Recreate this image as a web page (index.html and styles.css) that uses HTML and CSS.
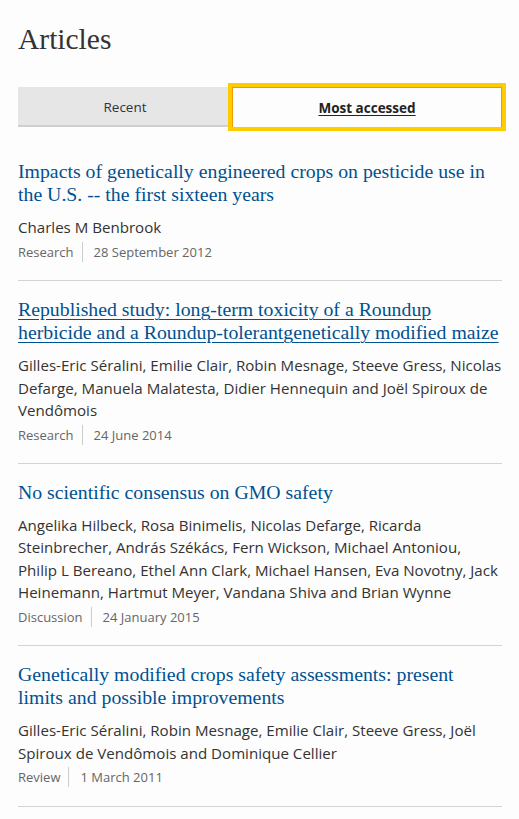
FILE: index.html
```html
<!DOCTYPE html>
<html lang="en">
<head>
<meta charset="utf-8">
<title>Articles</title>
<link rel="stylesheet" href="styles.css">
</head>
<body>
<main class="page">
  <h1 class="heading">Articles</h1>
  <div class="tabs">
    <button class="tab">Recent</button>
    <button class="tab tab-active">Most accessed</button>
  </div>
  <ul class="articles">
    <li class="article">
      <a class="article-title" href="#">Impacts of genetically engineered crops on pesticide use in the U.S. -- the first sixteen years</a>
      <p class="authors">Charles M Benbrook</p>
      <p class="meta"><span class="meta-type">Research</span><span class="meta-date">28 September 2012</span></p>
    </li>
    <li class="article">
      <a class="article-title article-title-hover" href="#">Republished study: long-term toxicity of a Roundup herbicide and a Roundup-tolerantgenetically modified maize</a>
      <p class="authors">Gilles-Eric Séralini, Emilie Clair, Robin Mesnage, Steeve Gress, Nicolas Defarge, Manuela Malatesta, Didier Hennequin and Joël Spiroux de Vendômois</p>
      <p class="meta"><span class="meta-type">Research</span><span class="meta-date">24 June 2014</span></p>
    </li>
    <li class="article">
      <a class="article-title" href="#">No scientific consensus on GMO safety</a>
      <p class="authors">Angelika Hilbeck, Rosa Binimelis, Nicolas Defarge, Ricarda Steinbrecher, András Székács, Fern Wickson, Michael Antoniou, Philip L Bereano, Ethel Ann Clark, Michael Hansen, Eva Novotny, Jack Heinemann, Hartmut Meyer, Vandana Shiva and Brian Wynne</p>
      <p class="meta"><span class="meta-type">Discussion</span><span class="meta-date">24 January 2015</span></p>
    </li>
    <li class="article">
      <a class="article-title" href="#">Genetically modified crops safety assessments: present limits and possible improvements</a>
      <p class="authors">Gilles-Eric Séralini, Robin Mesnage, Emilie Clair, Steeve Gress, Joël Spiroux de Vendômois and Dominique Cellier</p>
      <p class="meta"><span class="meta-type">Review</span><span class="meta-date">1 March 2011</span></p>
    </li>
  </ul>
</main>
</body>
</html>
```

FILE: styles.css
```css
html, body {
  margin: 0;
  padding: 0;
  background: #fdfdfd;
}

.page {
  padding: 21px 17px 0 18px;
  font-family: "Open Sans", "Noto Sans", sans-serif;
  color: #333;
}

.heading {
  margin: 0;
  font-family: "Liberation Serif", serif;
  font-weight: normal;
  font-size: 29.5px;
  line-height: 36px;
  color: #333;
}

.tabs {
  display: flex;
  margin-top: 30px;
  height: 40px;
}

.tab {
  font-family: "Open Sans", sans-serif;
  font-size: 13.5px;
  color: #333;
  border: none;
  margin: 0;
  padding: 0;
  background: #e6e6e6;
  cursor: pointer;
}

.tab:first-child {
  flex: 0 0 214px;
  padding-top: 2px;
  border-bottom: 2px solid #cfcfcf;
}

.tab-active {
  flex: 1;
  background: #fdfdfd;
  font-weight: bold;
  color: #222;
  text-decoration: underline;
  text-underline-offset: 2px;
  border: 1px solid #ef9b00;
  border-bottom: none;
  outline: 4px solid #ffcc00;
  position: relative;
  z-index: 1;
}

.articles {
  list-style: none;
  margin: 16px 0 0;
  padding: 0;
}

.article {
  padding: 17px 0 18.5px;
  border-bottom: 1px solid #d3d3d3;
}

.article-title {
  display: block;
  font-family: "Liberation Serif", serif;
  font-size: 19.8px;
  line-height: 23px;
  color: #005190;
  text-decoration: none;
}

.article-title-hover {
  text-decoration: underline;
  text-decoration-thickness: 1px;
  text-underline-offset: 3px;
}

.authors {
  margin: 10px 0 0;
  font-size: 15.1px;
  line-height: 22.3px;
  color: #333;
}

.meta {
  display: flex;
  align-items: center;
  margin: 3.5px 0 0;
  font-size: 13px;
  line-height: 20px;
  color: #666;
}

.meta-type {
  padding-right: 8px;
  margin-right: 11px;
  border-right: 1px solid #cccccc;
}
```
